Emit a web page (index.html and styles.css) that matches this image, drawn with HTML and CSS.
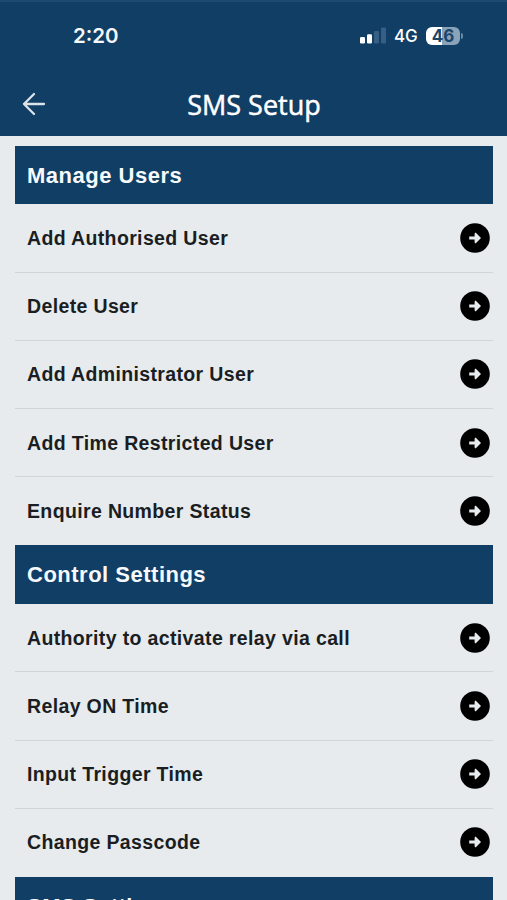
FILE: index.html
```
<!DOCTYPE html>
<html lang="en">
<head>
<meta charset="utf-8">
<meta name="viewport" content="width=device-width, initial-scale=1">
<title>SMS Setup</title>
<link rel="stylesheet" href="styles.css">
</head>
<body>
<svg class="defs" aria-hidden="true">
  <symbol id="go" viewBox="0 0 30 30">
    <circle cx="15" cy="15" r="14.8" fill="#000"/>
    <path d="M9.2 13.4H14.6V10.4L15.6 9.6L21 15L15.6 20.4L14.6 19.6V16.6H9.2Z" fill="#e7ebee"/>
  </symbol>
</svg>
<header class="top">
  <div class="status">
    <span class="time">2:20</span>
    <div class="indicators">
      <svg class="signal" width="27" height="17" viewBox="0 0 27 17">
        <rect x="0" y="10" width="5" height="6.5" rx="1.3" fill="#fff"/>
        <rect x="7" y="7.3" width="5" height="9.2" rx="1.3" fill="#fff"/>
        <rect x="14" y="4" width="5" height="12.5" rx="1.3" fill="#375f84"/>
        <rect x="21" y="0.5" width="5" height="16" rx="1.3" fill="#375f84"/>
      </svg>
      <span class="network">4G</span>
      <div class="battery"><span class="level">46</span></div>
    </div>
  </div>
  <nav class="bar">
    <svg class="back" width="24" height="24" viewBox="0 0 24 24" fill="none" stroke="#dbe3ea" stroke-width="2.3" stroke-linecap="round" stroke-linejoin="round"><path d="M22 12H2M12 2L2 12L12 22"/></svg>
    <h1 class="title">SMS Setup</h1>
  </nav>
</header>
<main class="list">
  <h2 class="section">Manage Users</h2>
  <div class="row"><span>Add Authorised User</span><svg class="go"><use href="#go"/></svg></div>
  <div class="row"><span>Delete User</span><svg class="go"><use href="#go"/></svg></div>
  <div class="row"><span>Add Administrator User</span><svg class="go"><use href="#go"/></svg></div>
  <div class="row"><span>Add Time Restricted User</span><svg class="go"><use href="#go"/></svg></div>
  <div class="row last"><span>Enquire Number Status</span><svg class="go"><use href="#go"/></svg></div>
  <h2 class="section">Control Settings</h2>
  <div class="row"><span>Authority to activate relay via call</span><svg class="go"><use href="#go"/></svg></div>
  <div class="row"><span>Relay ON Time</span><svg class="go"><use href="#go"/></svg></div>
  <div class="row"><span>Input Trigger Time</span><svg class="go"><use href="#go"/></svg></div>
  <div class="row last"><span>Change Passcode</span><svg class="go"><use href="#go"/></svg></div>
  <h2 class="section">SMS Settings</h2>
</main>
</body>
</html>
```
FILE: styles.css
```
* { box-sizing: border-box; }
body {
  margin: 0;
  height: 900px;
  overflow: hidden;
  background: #e7ebee;
  font-family: "Liberation Sans", Arial, sans-serif;
}
.defs { display: none; }
.top {
  height: 136px;
  background: #113e65;
  border-top: 2px solid #1d4a70;
  color: #fff;
}
.status {
  display: flex;
  justify-content: space-between;
  align-items: center;
  height: 67px;
  padding: 0 47px 0 73px;
  font-family: Inter, sans-serif;
}
.time { font-size: 20.5px; font-weight: 600; color: #f4f8fb; }
.indicators { display: flex; align-items: center; }
.signal { margin-right: 7px; }
.network { width: 25px; margin-right: 7px; font-size: 17px; font-weight: 500; letter-spacing: -0.2px; }
.battery {
  position: relative;
  width: 34px;
  height: 18px;
  border-radius: 6px;
  background: linear-gradient(90deg, #fff 46%, #8ba3b9 46%);
  color: #1b466c;
  font-size: 17px;
  font-weight: 700;
  line-height: 18px;
  text-align: center;
}
.battery::after {
  content: "";
  position: absolute;
  left: 35px;
  top: 6px;
  width: 2px;
  height: 6px;
  border-radius: 0 2px 2px 0;
  background: #6b8aa5;
}
.bar {
  display: grid;
  grid-template-columns: 24px 1fr 24px;
  align-items: center;
  height: 68px;
  padding: 4px 22px 0;
}
.back { margin-top: -2px; }
.title {
  margin: 0;
  padding-left: 1px;
  font: 400 27px/40px "Open Sans", sans-serif;
  text-align: center;
  -webkit-text-stroke: 0.5px #fff;
}
.list { padding: 9.7px 14px 0 15px; }
.section {
  height: 58.8px;
  margin: 0;
  padding-left: 12px;
  background: #113e65;
  color: #f6fafc;
  font-size: 22px;
  font-weight: 700;
  line-height: 59px;
  letter-spacing: 0.5px;
}
.row {
  display: flex;
  justify-content: space-between;
  align-items: center;
  height: 68.2px;
  padding: 1px 3px 0 12px;
  border-bottom: 1.5px solid #cfd5d9;
  color: #1a1e22;
  font-size: 19.5px;
  font-weight: 700;
  letter-spacing: 0.36px;
}
.last { border-bottom-color: transparent; }
.go { width: 30px; height: 30px; margin-top: -1px; }
```
